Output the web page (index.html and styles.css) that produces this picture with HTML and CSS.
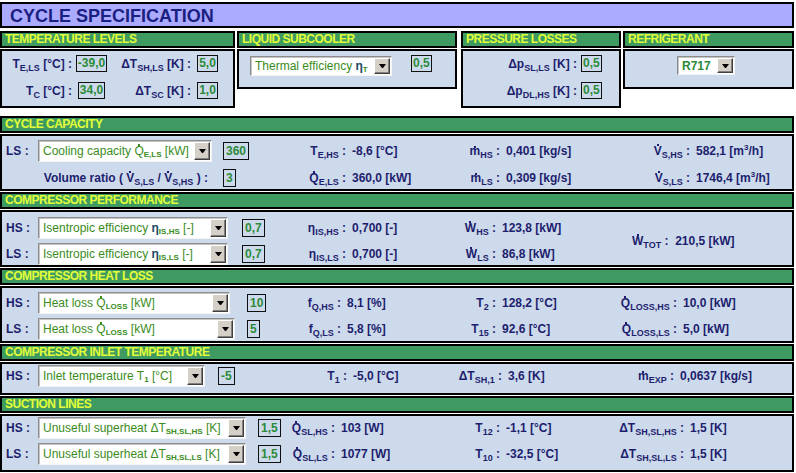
FILE: index.html
```html
<!DOCTYPE html>
<html>
<head>
<meta charset="utf-8">
<title>Cycle specification</title>
<link rel="stylesheet" href="styles.css">
</head>
<body>
<div class="sheet">
  <div class="title">CYCLE SPECIFICATION</div>

  <div class="toprow">
    <div class="tcol c-temp">
      <div class="hdr">TEMPERATURE LEVELS</div>
      <div class="panel p-temp">
        <span class="lab">T<sub>E,LS</sub> [°C] :</span><span class="box">-39,0</span>
        <span class="lab">ΔT<sub>SH,LS</sub> [K] :</span><span class="box">5,0</span>
        <span class="lab">T<sub>C</sub> [°C] :</span><span class="box">34,0</span>
        <span class="lab">ΔT<sub>SC</sub> [K] :</span><span class="box">1,0</span>
      </div>
    </div>
    <div class="tcol c-liq">
      <div class="hdr">LIQUID SUBCOOLER</div>
      <div class="panel p-liq">
        <div class="dd w142"><span class="dd-t">Thermal efficiency <span class="eta">η</span><sub>T</sub></span><span class="dd-b"></span></div>
        <span class="box">0,5</span>
      </div>
    </div>
    <div class="tcol c-pres">
      <div class="hdr">PRESSURE LOSSES</div>
      <div class="panel p-pres">
        <span class="lab">Δp<sub>SL,LS</sub> [K] :</span><span class="box">0,5</span>
        <span class="lab">Δp<sub>DL,HS</sub> [K] :</span><span class="box">0,5</span>
      </div>
    </div>
    <div class="tcol c-ref">
      <div class="hdr">REFRIGERANT</div>
      <div class="panel p-ref">
        <div class="dd w58 short"><span class="dd-t strong">R717</span><span class="dd-b"></span></div>
      </div>
    </div>
  </div>

  <div class="section s1">
    <div class="hdr">CYCLE CAPACITY</div>
    <div class="panel grid g1">
      <span class="side">LS :</span>
      <div class="dd w174"><span class="dd-t">Cooling capacity <span class="dot">Q</span><sub>E,LS</sub> [kW]</span><span class="dd-b"></span></div>
      <span class="box">360</span>
      <span class="rl">T<sub>E,HS</sub> :</span><span class="rv">-8,6 [°C]</span>
      <span class="rl"><span class="dot m">m</span><sub>HS</sub> :</span><span class="rv">0,401 [kg/s]</span>
      <span class="rl"><span class="dot">V</span><sub>S,HS</sub> :</span><span class="rv">582,1 [m<sup>3</sup>/h]</span>

      <span class="vr">Volume ratio ( <span class="dot">V</span><sub>S,LS</sub> / <span class="dot">V</span><sub>S,HS</sub> ) :</span>
      <span class="box">3</span>
      <span class="rl"><span class="dot">Q</span><sub>E,LS</sub> :</span><span class="rv">360,0 [kW]</span>
      <span class="rl"><span class="dot m">m</span><sub>LS</sub> :</span><span class="rv">0,309 [kg/s]</span>
      <span class="rl"><span class="dot">V</span><sub>S,LS</sub> :</span><span class="rv">1746,4 [m<sup>3</sup>/h]</span>
    </div>
  </div>

  <div class="section">
    <div class="hdr">COMPRESSOR PERFORMANCE</div>
    <div class="panel grid g2">
      <span class="side">HS :</span>
      <div class="dd w190"><span class="dd-t">Isentropic efficiency <span class="eta">η</span><sub>IS,HS</sub> [-]</span><span class="dd-b"></span></div>
      <span class="box">0,7</span>
      <span class="rl"><span class="eta-l">η</span><sub>IS,HS</sub> :</span><span class="rv">0,700 [-]</span>
      <span class="rl"><span class="dot">W</span><sub>HS</sub> :</span><span class="rv">123,8 [kW]</span>
      <span class="tot"><span class="dot">W</span><sub>TOT</sub> : &nbsp;210,5 [kW]</span>

      <span class="side">LS :</span>
      <div class="dd w190"><span class="dd-t">Isentropic efficiency <span class="eta">η</span><sub>IS,LS</sub> [-]</span><span class="dd-b"></span></div>
      <span class="box">0,7</span>
      <span class="rl"><span class="eta-l">η</span><sub>IS,LS</sub> :</span><span class="rv">0,700 [-]</span>
      <span class="rl"><span class="dot">W</span><sub>LS</sub> :</span><span class="rv">86,8 [kW]</span>
    </div>
  </div>

  <div class="section">
    <div class="hdr">COMPRESSOR HEAT LOSS</div>
    <div class="panel grid g3">
      <span class="side">HS :</span>
      <div class="dd w192"><span class="dd-t">Heat loss <span class="dot">Q</span><sub>LOSS</sub> [kW]</span><span class="dd-b"></span></div>
      <span class="box">10</span>
      <span class="rl">f<sub>Q,HS</sub> :</span><span class="rv">8,1 [%]</span>
      <span class="rl">T<sub>2</sub> :</span><span class="rv">128,2 [°C]</span>
      <span class="rl"><span class="dot">Q</span><sub>LOSS,HS</sub> :</span><span class="rv">10,0 [kW]</span>

      <span class="side">LS :</span>
      <div class="dd w197"><span class="dd-t">Heat loss <span class="dot">Q</span><sub>LOSS</sub> [kW]</span><span class="dd-b"></span></div>
      <span class="box">5</span>
      <span class="rl">f<sub>Q,LS</sub> :</span><span class="rv">5,8 [%]</span>
      <span class="rl">T<sub>15</sub> :</span><span class="rv">92,6 [°C]</span>
      <span class="rl"><span class="dot">Q</span><sub>LOSS,LS</sub> :</span><span class="rv">5,0 [kW]</span>
    </div>
  </div>

  <div class="section">
    <div class="hdr">COMPRESSOR INLET TEMPERATURE</div>
    <div class="panel grid g4">
      <span class="side">HS :</span>
      <div class="dd w167"><span class="dd-t">Inlet temperature T<sub>1</sub> [°C]</span><span class="dd-b"></span></div>
      <span class="box">-5</span>
      <span class="rl">T<sub>1</sub> :</span><span class="rv">-5,0 [°C]</span>
      <span class="rl">ΔT<sub>SH,1</sub> :</span><span class="rv">3,6 [K]</span>
      <span class="rl"><span class="dot m">m</span><sub>EXP</sub> :</span><span class="rv">0,0637 [kg/s]</span>
    </div>
  </div>

  <div class="section last">
    <div class="hdr">SUCTION LINES</div>
    <div class="panel grid g5">
      <span class="side">HS :</span>
      <div class="dd w208"><span class="dd-t">Unuseful superheat ΔT<sub>SH,SL,HS</sub> [K]</span><span class="dd-b"></span></div>
      <span class="box">1,5</span>
      <span class="rl"><span class="dot">Q</span><sub>SL,HS</sub> :</span><span class="rv">103 [W]</span>
      <span class="rl">T<sub>12</sub> :</span><span class="rv">-1,1 [°C]</span>
      <span class="rl">ΔT<sub>SH,SL,HS</sub> :</span><span class="rv">1,5 [K]</span>

      <span class="side">LS :</span>
      <div class="dd w208"><span class="dd-t">Unuseful superheat ΔT<sub>SH,SL,LS</sub> [K]</span><span class="dd-b"></span></div>
      <span class="box">1,5</span>
      <span class="rl"><span class="dot">Q</span><sub>SL,LS</sub> :</span><span class="rv">1077 [W]</span>
      <span class="rl">T<sub>10</sub> :</span><span class="rv">-32,5 [°C]</span>
      <span class="rl">ΔT<sub>SH,SL,LS</sub> :</span><span class="rv">1,5 [K]</span>
    </div>
  </div>
</div>
</body>
</html>
```

FILE: styles.css
```css
* { box-sizing: border-box; }
html, body { margin: 0; padding: 0; background: #ffffff; }
body {
  font-family: "Liberation Sans", Arial, sans-serif;
  font-size: 12px;
  font-weight: bold;
  color: #1e1e6e;
}
.sheet { width: 794px; padding-top: 2px; }

.title {
  height: 26px;
  background: #aaaaff;
  border: 2px solid #000;
  color: #1a2080;
  font-size: 18px;
  line-height: 20px;
  padding: 2px 0 0 8px;
  white-space: nowrap;
}

.hdr {
  height: 17px;
  border: 2px solid #000;
  background: #3f9a62;
  color: #e2ff38;
  font-size: 12px;
  line-height: 13px;
  letter-spacing: -0.5px;
  padding-left: 3px;
  margin-bottom: 1px;
  white-space: nowrap;
}

.panel {
  border: 2px solid #000;
  background: #ccdaec;
}

/* top row */
.toprow { display: flex; align-items: flex-start; margin-top: 3px; }
.tcol { flex: none; }
.c-temp { width: 235px; }
.c-liq { width: 220px; margin-left: 2px; }
.c-pres { width: 160px; margin-left: 4px; }
.c-ref { width: 171px; margin-left: 2px; }

.p-temp {
  height: 59px;
  display: grid;
  grid-template-columns: 73px 33px 86px 27px;
  grid-auto-rows: 17px;
  row-gap: 10px;
  padding-top: 4px;
  align-items: center;
}
.p-temp .lab { justify-self: end; padding-right: 3px; white-space: nowrap; }
.p-temp .box { justify-self: center; }

.p-liq {
  height: 40px;
  display: flex;
  align-items: flex-start;
  padding: 4px 0 0 11px;
}
.p-liq .dd { height: 20px; margin-top: 1px; }
.p-liq .box { margin-left: 19px; }

.p-pres {
  height: 59px;
  display: grid;
  grid-template-columns: 118px auto;
  grid-auto-rows: 17px;
  row-gap: 10px;
  padding-top: 4px;
  align-items: center;
}
.p-pres .lab { justify-self: end; padding-right: 4px; white-space: nowrap; }
.p-pres .box { justify-self: start; }

.p-ref { height: 40px; padding: 5px 0 0 52px; }

/* sections */
.section { margin-bottom: 1px; }
.s1 { margin-top: 8px; }
.section .panel { height: 57px; }
.section.last .panel { height: 58px; }

.grid { display: grid; align-items: center; }
.g1 { grid-template-columns: 36px 185px 37px 86px 119px 35px 135px 55px 1fr; grid-auto-rows: 24px; row-gap: 3px; padding-top: 3px; }
.g2 { grid-template-columns: 36px 204px 38px 66px 119px 31px 136px 1fr; grid-auto-rows: 22px; row-gap: 4px; padding-top: 5px; }
.g3 { grid-template-columns: 36px 209px 43px 51px 124px 31px 116px 65px 1fr; grid-auto-rows: 22px; row-gap: 4px; padding-top: 4px; }
.g4 { grid-template-columns: 36px 180px 42px 87px 93px 62px 110px 62px 1fr; grid-auto-rows: 22px; padding-top: 1px; }
.section .g4 { height: 33px; }
.g5 { grid-template-columns: 36px 220px 32px 45px 120px 45px 112px 72px 1fr; grid-auto-rows: 22px; row-gap: 4px; padding-top: 1px; }

.side { padding-left: 4px; white-space: nowrap; }
.rl { justify-self: end; white-space: nowrap; }
.rv { padding-left: 6px; white-space: nowrap; }
.vr { grid-column: span 2; justify-self: end; padding-right: 15px; white-space: nowrap; }
.tot { grid-row: span 2; white-space: nowrap; }

sub { font-size: 9px; vertical-align: -3px; line-height: 0; }
sup { font-size: 8px; vertical-align: 5px; line-height: 0; }

.dot { position: relative; }
.dot::after {
  content: "";
  position: absolute;
  left: 50%;
  top: 0;
  width: 2px;
  height: 2px;
  margin-left: -1px;
  background: currentColor;
}
.dot.m::after { top: 2px; }

.eta-l { font-size: 12px; }

/* input boxes */
.box {
  justify-self: start;
  display: inline-block;
  height: 18px;
  line-height: 16px;
  border: 1px solid #101010;
  padding: 0 2px;
  color: #2c8a38;
  white-space: nowrap;
}
.p-temp .box, .p-pres .box, .p-liq .box { height: 17px; line-height: 15px; padding: 0 1px; }

/* dropdowns */
.dd {
  justify-self: start;
  display: flex;
  align-items: center;
  height: 22px;
  background: #ffffff;
  border: 1px solid;
  border-color: #8c8c8c #f4f4f4 #f4f4f4 #8c8c8c;
  box-shadow: inset 1px 1px 0 #c4c4c4;
  padding: 1px 1px 1px 0;
}
.dd.short { height: 19px; }
.dd-t {
  flex: 1;
  min-width: 0;
  overflow: hidden;
  white-space: nowrap;
  padding-left: 4px;
  color: #3a8c1c;
  font-weight: normal;
  font-size: 12px;
}
.dd-t.strong { font-weight: bold; color: #2c8a38; }
.dd-t sub { font-size: 8px; font-weight: bold; vertical-align: -2px; }
.dd-t .eta { font-weight: bold; color: #1c4a6a; }
.dd-b {
  flex: none;
  width: 16px;
  align-self: stretch;
  background: #d4d0c8;
  border: 1px solid;
  border-color: #ffffff #404040 #404040 #ffffff;
  box-shadow: inset -1px -1px 0 #808080;
  display: flex;
  align-items: center;
  justify-content: center;
}
.dd-b::after {
  content: "";
  width: 1px;
  height: 0;
  border-left: 3px solid transparent;
  border-right: 3px solid transparent;
  border-top: 4px solid #000;
}

.w142 { width: 142px; }
.w58 { width: 58px; }
.w174 { width: 174px; }
.w190 { width: 190px; }
.w192 { width: 192px; }
.w197 { width: 197px; }
.w167 { width: 167px; }
.w208 { width: 208px; }
```
